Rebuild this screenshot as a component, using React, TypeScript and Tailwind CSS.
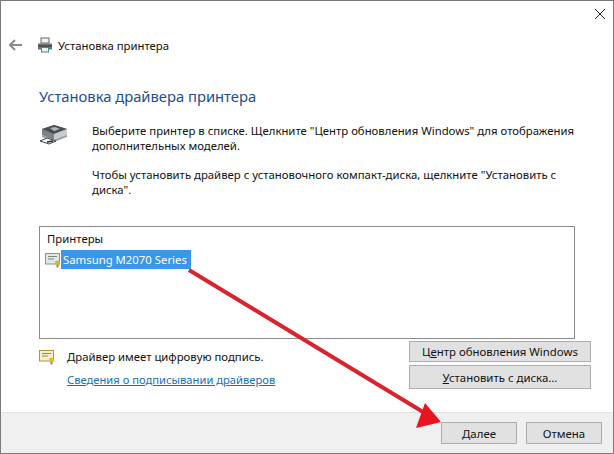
const font = { fontFamily: '"Noto Sans", sans-serif' }

const PrinterSmall = () => (
  <svg width="16" height="16" viewBox="0 0 16 16">
    <rect x="4" y="1" width="8" height="5" fill="#f4f4f4" stroke="#666" />
    <path d="M1 6.5h14v6H1z" fill="#6f7478" />
    <rect x="1" y="8" width="14" height="2" fill="#4d5256" />
    <rect x="4.5" y="10.5" width="7" height="4.5" fill="#e8f2f2" stroke="#3f8f8f" />
  </svg>
)

const PrinterLarge = () => (
  <svg width="30" height="26" viewBox="0 0 30 26">
    <path d="M3 7 15 3l13 4v6L15 18 3 13z" fill="#7d8286" />
    <path d="M3 7 15 3l13 4-13 5z" fill="#4a4f54" />
    <path d="M11 6l5-1 5 2-6 2z" fill="#aeb6bb" />
    <path d="M15 12v6l13-5V7z" fill="#c9cccf" />
    <path d="M3 13v2l12 5 13-5v-2L15 18z" fill="#999ea2" />
    <path d="M1 19l7-3 9 3-7 3z" fill="#fff" stroke="#444" strokeWidth="1" />
    <path d="M8 20l6-1" stroke="#222" strokeWidth="1.5" />
  </svg>
)

const Certificate = () => (
  <svg width="16" height="16" viewBox="0 0 16 16">
    <rect x="0.5" y="1.5" width="14" height="10.5" fill="#f7efc4" stroke="#a89a45" />
    <path d="M3 4.5h9M3 7h6" stroke="#8b8a5a" strokeWidth="1" />
    <circle cx="12.5" cy="11" r="2.5" fill="#e4bf2c" />
    <path d="M11.5 13h2v2.5h-2z" fill="#8f8f70" />
  </svg>
)

const CertificateGrey = () => (
  <svg width="16" height="16" viewBox="0 0 16 16">
    <rect x="0.5" y="1.5" width="14" height="10.5" fill="#dfe9e4" stroke="#8c9488" />
    <path d="M3 4.5h9M3 7h6" stroke="#7b8a80" strokeWidth="1" />
    <circle cx="12.5" cy="11" r="2.5" fill="#c9b83a" />
    <path d="M11.5 13h2v2.5h-2z" fill="#7f8a80" />
  </svg>
)

const Button = ({ children, className }: { children: React.ReactNode; className: string }) => (
  <button className={`flex items-center justify-center border border-[#adadad] bg-[#e1e1e1] text-[11.4px] text-[#111] ${className}`}>
    {children}
  </button>
)

export default function App() {
  return (
    <div style={font} className="relative flex h-[454px] w-[614px] flex-col overflow-hidden border border-[#7a7a7a] bg-white text-[11.35px] leading-[15px] text-[#111]">
      <div className="flex h-[28px] justify-end pr-[7px] pt-[7px]">
        <svg width="12" height="12" viewBox="0 0 12 12" stroke="#222" strokeWidth="1" fill="none">
          <path d="M1 1l10 10M11 1 1 11" />
        </svg>
      </div>

      <div className="flex h-[32px] items-center">
        <svg className="ml-[8px]" width="14" height="12" viewBox="0 0 14 12" stroke="#8a8a8a" strokeWidth="2" fill="none">
          <path d="M6 1 1 6l5 5M1 6h12" />
        </svg>
        <span className="ml-[14px]"><PrinterSmall /></span>
        <span className="ml-[5px]">Установка принтера</span>
      </div>

      <h1 className="ml-[38px] mt-[23px] text-[14.75px] font-normal leading-[24px] text-[#1c4f8c]">Установка драйвера принтера</h1>

      <div className="ml-[38px] mt-[15px] flex">
        <span className="mt-[-1px] shrink-0"><PrinterLarge /></span>
        <div className="ml-[23px] w-[490px]">
          <p>Выберите принтер в списке. Щелкните "Центр обновления Windows" для отображения дополнительных моделей.</p>
          <p className="mt-[14px]">Чтобы установить драйвер с установочного компакт-диска, щелкните "Установить с диска".</p>
        </div>
      </div>

      <div className="mx-[38px] mt-[29px] h-[113px] border border-[#8a8a8a] px-[7px] pt-[4px]">
        <div>Принтеры</div>
        <div className="ml-[-2px] mt-[4px] flex items-center">
          <CertificateGrey />
          <span className="flex h-[19px] w-[130px] items-center bg-[#3a96ea] pl-[2px] text-white">Samsung M2070 Series</span>
        </div>
      </div>

      <div className="flex">
        <div className="ml-[38px] mt-[10px] flex">
          <Certificate />
          <div className="ml-[12px]">
            <p>Драйвер имеет цифровую подпись.</p>
            <a className="mt-[8px] block text-[11.2px] text-[#1a6fb5] underline">Сведения о подписывании драйверов</a>
          </div>
        </div>
        <div className="ml-auto mr-[22px] mt-[2px] flex flex-col gap-[3px]">
          <Button className="h-[21px] w-[182px]"><span>Ц<u>е</u>нтр обновления Windows</span></Button>
          <Button className="h-[24px] w-[182px]"><span><u>У</u>становить с диска...</span></Button>
        </div>
      </div>

      <div className="mt-auto flex h-[41px] items-start justify-end gap-[9px] border-t border-[#e2e2e2] bg-[#f0f0f0] pr-[11px] pt-[9px]">
        <Button className="h-[22px] w-[76px]"><span><u>Д</u>алее</span></Button>
        <Button className="h-[22px] w-[76px]">Отмена</Button>
      </div>

      <svg className="absolute left-[-1px] top-[-1px]" width="614" height="454" viewBox="0 0 614 454">
        <path d="M189 270 428 415" stroke="#d9232e" strokeWidth="4" fill="none" />
        <path d="M441 422 416 428 425 403z" fill="#e8141f" />
      </svg>
    </div>
  )
}
